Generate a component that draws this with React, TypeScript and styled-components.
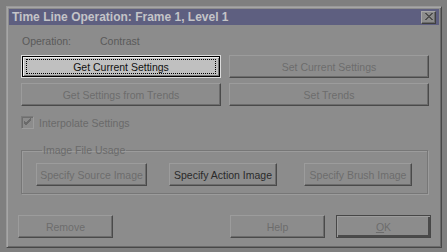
import React from "react";
import styled, { createGlobalStyle, css } from "styled-components";

const Global = createGlobalStyle`
  html, body { margin: 0; padding: 0; background: #7f7f7f; }
  body { width: 447px; height: 252px; overflow: hidden; font-family: "Liberation Sans", Arial, sans-serif; }
`;

const Screen = styled.div`
  padding: 6px 0 0 6px;
`;

const Dialog = styled.div`
  box-sizing: border-box;
  width: 436px;
  height: 242px;
  background: #8c8c8c;
  border: 1px solid;
  border-color: #999 #474747 #474747 #999;
  box-shadow: inset 1px 1px 0 #a6a6a6, inset -1px -1px 0 #6a6a6a;
  padding: 2px;
  display: flex;
  flex-direction: column;
`;

const TitleBar = styled.div`
  height: 16px;
  background: #5e5f80;
  display: flex;
  align-items: center;
  justify-content: space-between;
  padding: 0 3px 0 3px;
`;

const TitleText = styled.span`
  color: #c4c4c8;
  font-weight: bold;
  font-size: 12px;
`;

const CloseBtn = styled.div`
  box-sizing: border-box;
  width: 15px;
  height: 13px;
  background: #8c8c8c;
  border: 1px solid;
  border-color: #a6a6a6 #3f3f3f #3f3f3f #a6a6a6;
  box-shadow: inset -1px -1px 0 #6a6a6a;
  display: flex;
  align-items: center;
  justify-content: center;
`;

const Body = styled.div`
  flex: 1;
  display: flex;
  flex-direction: column;
  padding: 0 11px 0 11px;
`;

const OpRow = styled.div`
  display: flex;
  margin-top: 9px;
  height: 14px;
  align-items: center;
  font-size: 10.5px;
  color: #5a5a5a;
  padding-left: 2px;
`;

const OpLabel = styled.span`
  width: 78px;
`;

const ButtonGrid = styled.div`
  display: grid;
  grid-template-columns: 200px 200px;
  column-gap: 8px;
  row-gap: 5px;
  margin-top: 7px;
  margin-left: 1px;
`;

const Btn = styled.div<{ $w?: number; $disabled?: boolean; $default?: boolean; $focus?: boolean }>`
  box-sizing: border-box;
  width: ${(p) => (p.$w ? `${p.$w}px` : "auto")};
  height: 23px;
  display: flex;
  align-items: center;
  justify-content: center;
  font-size: 10.5px;
  background: #8c8c8c;
  color: ${(p) => (p.$disabled ? "#6c6c6c" : "#2a2a2a")};
  border: 1px solid;
  border-color: #9c9c9c #4a4a4a #4a4a4a #9c9c9c;
  box-shadow: inset -1px -1px 0 #6c6c6c;
  ${(p) =>
    p.$default &&
    css`
      border-color: #474747;
      box-shadow: inset 1px 1px 0 #9c9c9c, inset -2px -2px 0 #4a4a4a;
    `}
  ${(p) =>
    p.$focus &&
    css`
      background: #c0c0c0;
      color: #111;
      border: 1px solid #dcdcdc;
      box-shadow: inset 0 0 0 1px #000, inset 2px 2px 0 #f0f0f0, inset -2px -2px 0 #7a7a7a;
      position: relative;
      &::after {
        content: "";
        position: absolute;
        inset: 3px 4px 3px 4px;
        border: 1px dotted #000;
      }
    `}
`;

const Gap = styled.span<{ $w: number }>`
  flex: none;
  width: ${(p) => p.$w}px;
`;

const CheckRow = styled.label`
  display: flex;
  align-items: center;
  margin-top: 10px;
  margin-left: 1px;
  height: 13px;
  font-size: 10.5px;
  color: #6a6a6a;
`;

const Box = styled.span`
  box-sizing: border-box;
  width: 13px;
  height: 13px;
  background: #8c8c8c;
  border: 1px solid;
  border-color: #7a7a7a #9c9c9c #9c9c9c #7a7a7a;
  box-shadow: inset 1px 1px 0 #6e6e6e;
  display: flex;
  align-items: center;
  justify-content: center;
  margin-right: 5px;
`;

const Group = styled.fieldset`
  box-sizing: border-box;
  margin: 16px 0 0 1px;
  width: 407px;
  height: 49px;
  padding: 0 0 0 14px;
  border: 1px solid #777;
  box-shadow: 1px 1px 0 #9c9c9c, inset 1px 1px 0 #9c9c9c;
  display: flex;
  align-items: flex-start;
`;

const Legend = styled.legend`
  font-size: 10.5px;
  color: #6a6a6a;
  padding: 0 1px;
  margin-left: 6px;
  line-height: 10px;
`;

const GroupRow = styled.div`
  display: flex;
  margin-top: 8px;
`;

const Footer = styled.div`
  display: flex;
  margin: 21px -3px 0 -2px;
`;

const Spacer = styled.div`
  flex: 1;
`;

const Underline = styled.span`
  text-decoration: underline;
`;

export default function App() {
  return (
    <>
      <Global />
      <Screen>
        <Dialog>
          <TitleBar>
            <TitleText>Time Line Operation: Frame 1, Level 1</TitleText>
            <CloseBtn>
              <svg width="9" height="8" viewBox="0 0 9 8">
                <path d="M1 0 L8 7 M2 0 L9 7 M8 0 L1 7 M9 0 L2 7" stroke="#4e4e4e" strokeWidth="1" />
              </svg>
            </CloseBtn>
          </TitleBar>
          <Body>
            <OpRow>
              <OpLabel>Operation:</OpLabel>
              <span>Contrast</span>
            </OpRow>
            <ButtonGrid>
              <Btn $focus>Get Current Settings</Btn>
              <Btn $disabled>Set Current Settings</Btn>
              <Btn $disabled>Get Settings from Trends</Btn>
              <Btn $disabled>Set Trends</Btn>
            </ButtonGrid>
            <CheckRow>
              <Box>
                <svg width="9" height="9" viewBox="0 0 9 9">
                  <path d="M1 4 L3 6 L8 1 M1 5 L3 7 L8 2 M1 3 L3 5 L8 0" stroke="#6a6a6a" strokeWidth="1" fill="none" />
                </svg>
              </Box>
              Interpolate Settings
            </CheckRow>
            <Group>
              <Legend>Image File Usage</Legend>
              <GroupRow>
                <Btn $w={111} $disabled>Specify Source Image</Btn>
                <Gap $w={22} />
                <Btn $w={108}>Specify Action Image</Btn>
                <Gap $w={27} />
                <Btn $w={108} $disabled>Specify Brush Image</Btn>
              </GroupRow>
            </Group>
            <Footer>
              <Btn $w={95} $disabled>Remove</Btn>
              <Spacer />
              <Btn $w={95} $disabled>Help</Btn>
              <Gap $w={11} />
              <Btn $w={95} $default $disabled>
                <Underline>O</Underline>K
              </Btn>
            </Footer>
          </Body>
        </Dialog>
      </Screen>
    </>
  );
}
